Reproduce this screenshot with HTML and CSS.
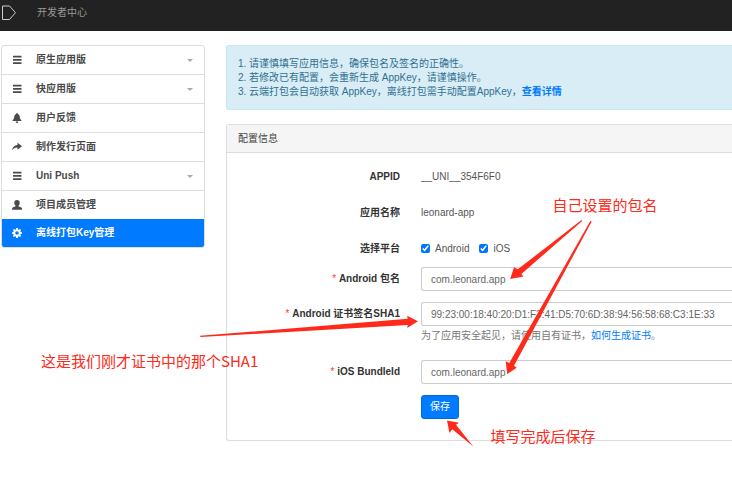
FILE: index.html
```html
<!DOCTYPE html>
<html lang="zh-CN">
<head>
<meta charset="utf-8">
<title>开发者中心</title>
<link rel="stylesheet" href="styles.css">
</head>
<body>
<header class="topbar">
  <svg class="logo" viewBox="0 0 16 16"><path d="M2.500 1h7l6 6.700-6 6.800h-7z"/></svg>
  <a class="brand" href="#">开发者中心</a>
</header>
<div class="layout">
  <nav class="sidebar">
    <a class="item" href="#"><svg class="icon" viewBox="0 0 10 10"><path d="M1 .7h8.500v1.800H1zM1 4h8.500v1.700H1zM1 7.200h8.500V9H1z"/></svg><span class="name">原生应用版</span><i class="caret"></i></a>
    <a class="item" href="#"><svg class="icon" viewBox="0 0 10 10"><path d="M1 .7h8.500v1.800H1zM1 4h8.500v1.700H1zM1 7.200h8.500V9H1z"/></svg><span class="name">快应用版</span><i class="caret"></i></a>
    <a class="item" href="#"><svg class="icon" viewBox="0 0 10 10"><path d="M5 0c.6 0 .8.4.8.9C7.300 1.400 7.700 2.700 7.800 4c.1 1.500.5 2.200 1.600 3.300v.7H.6v-.7C1.700 6.200 2.100 5.500 2.200 4c.1-1.300.5-2.600 2-3.100C4.200.4 4.400 0 5 0zM3.800 8.500h2.400c0 1-.5 1.500-1.200 1.500s-1.200-.5-1.200-1.500z"/></svg><span class="name">用户反馈</span></a>
    <a class="item" href="#"><svg class="icon" viewBox="0 0 10 10"><path d="M5.500.8 10 4.300 5.500 7.800V5.600C3.200 5.600 1.400 6.300 0 8.300.4 5.200 2.200 3.200 5.500 2.900z"/></svg><span class="name">制作发行页面</span></a>
    <a class="item" href="#"><svg class="icon" viewBox="0 0 10 10"><path d="M1 .7h8.500v1.800H1zM1 4h8.500v1.700H1zM1 7.200h8.500V9H1z"/></svg><span class="name">Uni Push</span><i class="caret"></i></a>
    <a class="item" href="#"><svg class="icon" viewBox="0 0 10 10"><path d="M5 0c1.900 0 2.700 1.100 2.700 2.700 0 1.300-.5 2.300-1.200 2.900v.7c.8.6 2.400.9 3.100 1.500.4.400.5 1 .5 1.900H0c0-.9.1-1.500.5-1.900.7-.6 2.200-.9 3-1.500v-.7c-.7-.6-1.200-1.600-1.200-2.900C2.300 1.100 3.100 0 5 0z"/></svg><span class="name">项目成员管理</span></a>
    <a class="item active" href="#"><svg class="icon" viewBox="0 0 10 10"><path fill-rule="evenodd" d="M4.200 0h1.600l.3 1.400.7.300L8 .9 9.100 2l-.8 1.200.3.700 1.400.3v1.600l-1.400.3-.3.700.8 1.200L8 9.100l-1.200-.8-.7.3L5.800 10H4.200l-.3-1.400-.7-.3-1.200.8L.9 8l.8-1.200-.3-.7L0 5.800V4.200l1.400-.3.300-.7L.9 2 2 .9l1.200.8.700-.3zM5 3.200a1.800 1.800 0 1 0 0 3.600 1.800 1.800 0 0 0 0-3.600z"/></svg><span class="name">离线打包Key管理</span></a>
  </nav>
  <main class="content">
    <ol class="notice">
      <li>请谨慎填写应用信息，确保包名及签名的正确性。</li>
      <li>若修改已有配置，会重新生成 AppKey，请谨慎操作。</li>
      <li>云端打包会自动获取 AppKey，离线打包需手动配置AppKey，<a class="strong" href="#">查看详情</a></li>
    </ol>
    <section class="panel">
      <h2 class="panel-title">配置信息</h2>
      <form class="form">
        <div class="row static"><span class="label">APPID</span><span>__UNI__354F6F0</span></div>
        <div class="row static"><span class="label">应用名称</span><span>leonard-app</span></div>
        <div class="row static tight"><span class="label">选择平台</span>
          <div class="checks">
            <label class="check"><input type="checkbox" checked>Android</label>
            <label class="check"><input type="checkbox" checked>iOS</label>
          </div>
        </div>
        <div class="row"><label class="label required" for="pkg">Android 包名</label><input class="text" id="pkg" type="text" value="com.leonard.app"></div>
        <div class="row with-help"><label class="label required" for="sha">Android 证书签名SHA1</label>
          <input class="text" id="sha" type="text" value="99:23:00:18:40:20:D1:F3:41:D5:70:6D:38:94:56:58:68:C3:1E:33">
          <p class="help">为了应用安全起见，请使用自有证书，<a href="#">如何生成证书</a>。</p>
        </div>
        <div class="row"><label class="label required" for="bundle">iOS BundleId</label><input class="text" id="bundle" type="text" value="com.leonard.app"></div>
        <div class="row"><button class="save" type="button">保存</button></div>
      </form>
    </section>
  </main>
</div>
<svg class="marks" width="732" height="477" viewBox="0 0 732 477">
  <path d="M581.500 220 517.800 269.300 514 267.300 510.200 279 523.500 276.500 521.300 274 582.200 221z"/>
  <path d="M590.300 221 509.300 363 505.700 361.300 507.200 374 516.700 367.700 514 365.700 591.700 221.500z"/>
  <path d="M200 335.800 407.800 318.800 407 315.800 418 321.300 407.200 328 407.800 325 200.500 337z"/>
  <path d="M447 420.500 459 422.800 456 424.800 473.300 446.500 452.300 429.300 449.500 433z"/>
  <text x="552.500" y="211">自己设置的包名</text>
  <text x="41" y="367">这是我们刚才证书中的那个SHA1</text>
  <text x="490.500" y="442">填写完成后保存</text>
</svg>
</body>
</html>
```
FILE: styles.css
```css
* { box-sizing: border-box; }
body {
  margin: 0;
  background: #fff;
  color: #555;
  font: 10px/14px "Liberation Sans", "Noto Sans CJK SC", sans-serif;
  overflow-x: hidden;
}
a { color: #007bff; text-decoration: none; }
.topbar {
  display: flex;
  align-items: center;
  gap: 21px;
  height: 31px;
  padding-bottom: 5px;
  background: #222;
}
.logo { width: 16px; height: 16px; fill: none; stroke: #ccc; }
.brand { color: #999; }
.layout { display: flex; align-items: flex-start; gap: 21px; padding: 14px 0 0 1px; }
.sidebar {
  flex: 0 0 204px;
  border: 1px solid #ddd;
  border-radius: 3px;
  overflow: hidden;
}
.item {
  display: flex;
  align-items: center;
  gap: 14px;
  height: 29px;
  padding: 0 11px 0 10px;
  border-bottom: 1px solid #ddd;
  color: #4a4a4a;
  font-weight: bold;
}
.item.active { height: 28px; margin-top: -1px; border: 0; background: #007bff; color: #fff; }
.icon { width: 10px; height: 10px; fill: currentColor; }
.name { flex: 1; }
.caret { border: 3px solid transparent; border-top-color: #aaa; border-bottom: 0; }
.content { flex: 1; min-width: 0; }
.notice {
  margin: 0 0 14px;
  padding: 11px 0 10px 22px;
  border: 1px solid #c5e8f0;
  border-right: 0;
  border-radius: 3px 0 0 3px;
  background: #d9edf7;
  color: #31708f;
}
.strong { font-weight: bold; }
.panel { border: 1px solid #ddd; border-right: 0; border-radius: 3px 0 0 3px; }
.panel-title {
  margin: 0;
  padding: 7px 11px 6px;
  border-bottom: 1px solid #ddd;
  background: #f5f5f5;
  color: #444;
  font-size: 10px;
  font-weight: normal;
}
.form { padding: 11px 0 21px; }
.row {
  display: grid;
  grid-template-columns: 173px 1fr;
  column-gap: 21px;
  align-items: center;
  min-height: 24px;
  margin-bottom: 11px;
}
.row.static { min-height: 25px; }
.row:last-child { margin-bottom: 0; }
.row.tight { margin-bottom: 6px; }
.row.with-help { margin-bottom: 17px; }
.label { color: #333; font-weight: bold; text-align: right; }
.required::before { content: "* "; color: #f33; font-weight: normal; }
.checks { display: flex; gap: 10px; }
.check { display: flex; align-items: center; gap: 5px; }
.check input { width: 9px; height: 9px; margin: 0; accent-color: #0075ff; }
.text {
  width: 100%;
  height: 24px;
  padding: 0 9px;
  border: 1px solid #ccc;
  border-right: 0;
  border-radius: 3px 0 0 3px;
  background: #fff;
  color: #666;
  font: inherit;
}
.help { grid-column: 2; margin: 3px 0 0; color: #777; }
.save {
  grid-column: 2;
  justify-self: start;
  height: 24px;
  padding: 0 8px;
  border: 1px solid #0069d9;
  border-radius: 3px;
  background: #007bff;
  color: #fff;
  font: inherit;
}
.marks { position: absolute; top: 0; left: 0; fill: #ff2a1a; pointer-events: none; }
.marks text { font: 15px "Noto Sans CJK SC", sans-serif; }
```
